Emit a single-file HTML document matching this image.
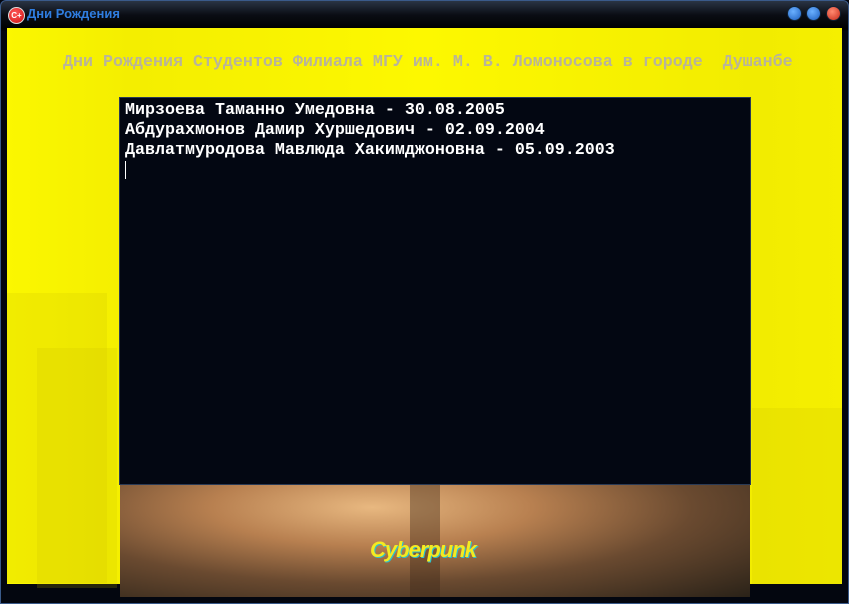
<!DOCTYPE html>
<html><head><meta charset="utf-8"><style>
*{margin:0;padding:0;box-sizing:border-box}
body{width:849px;height:604px;overflow:hidden;background:#03060f;position:relative;font-family:"Liberation Sans",sans-serif}
.frame{position:absolute;inset:0;border:1px solid #3a5a8a;border-radius:6px 6px 0 0;background:linear-gradient(#2a3444 0,#0a0d14 14px,#000 28px,#03060f 30px)}
.tb{position:absolute;left:27px;top:6px;font:bold 13px "Liberation Sans",sans-serif;color:#2f7de0}
.ic{position:absolute;left:8px;top:7px;width:17px;height:17px;border-radius:50%;background:radial-gradient(circle at 40% 35%,#ff5a5a,#d01010);border:1px solid #ddd;color:#fff;font:bold 8px sans-serif;text-align:center;line-height:15px}
.btn{position:absolute;top:6px;width:15px;height:15px;border-radius:50%;border:1px solid #123}
.client{position:absolute;left:7px;top:28px;width:835px;height:556px;background:linear-gradient(90deg,#fbf700 0,#f4ee00 15%,#fdf800 50%,#f2ec00 90%,#f5ef00 100%)}
.bld{position:absolute;background:rgba(200,190,0,.18)}
.h{position:absolute;left:63px;top:53px;font:bold 16.67px "Liberation Mono",monospace;color:#b8b49a;white-space:pre}
.box{position:absolute;left:119px;top:97px;width:632px;height:388px;background:#030712;border:1px solid #2a3a55;padding:3px 0 0 5px;font:bold 16.67px/20px "Liberation Mono",monospace;color:#fff;white-space:pre}
.img{position:absolute;left:120px;top:485px;width:630px;height:112px;background:radial-gradient(ellipse at 40% 20%,#e8b880 0,#b88050 30%,#6a4a30 60%,#2a2218 100%)}
.logo{position:absolute;left:370px;top:537px;font:italic bold 22px "Liberation Sans",sans-serif;color:#f5ea20;letter-spacing:-1px;text-shadow:1px 1px 0 #2ac0d0}
</style></head><body>
<div class="frame"></div>
<div class="ic">C+</div>
<div class="tb">Дни Рождения</div>
<div class="btn" style="left:787px;background:radial-gradient(circle at 40% 35%,#6ab0ff,#1d5fc0)"></div>
<div class="btn" style="left:806px;background:radial-gradient(circle at 40% 35%,#6ab0ff,#1d5fc0)"></div>
<div class="btn" style="left:826px;background:radial-gradient(circle at 40% 35%,#ff8a70,#c82a1a)"></div>
<div class="client">
<div class="bld" style="left:0;top:265px;width:100px;height:290px"></div>
<div class="bld" style="left:30px;top:320px;width:80px;height:240px"></div>
<div class="bld" style="left:745px;top:380px;width:90px;height:176px"></div>
</div>
<div class="h">Дни Рождения Студентов Филиала МГУ им. М. В. Ломоносова в городе  Душанбе</div>
<div class="box">Мирзоева Таманно Умедовна - 30.08.2005
Абдурахмонов Дамир Хуршедович - 02.09.2004
Давлатмуродова Мавлюда Хакимджоновна - 05.09.2003
<span style="display:inline-block;width:1px;height:18px;background:#fff"></span></div>
<div class="img"><div style="position:absolute;left:290px;top:0;width:30px;height:112px;background:rgba(60,40,25,.4)"></div></div>
<div class="logo">Cyberpunk</div>
</body></html>
